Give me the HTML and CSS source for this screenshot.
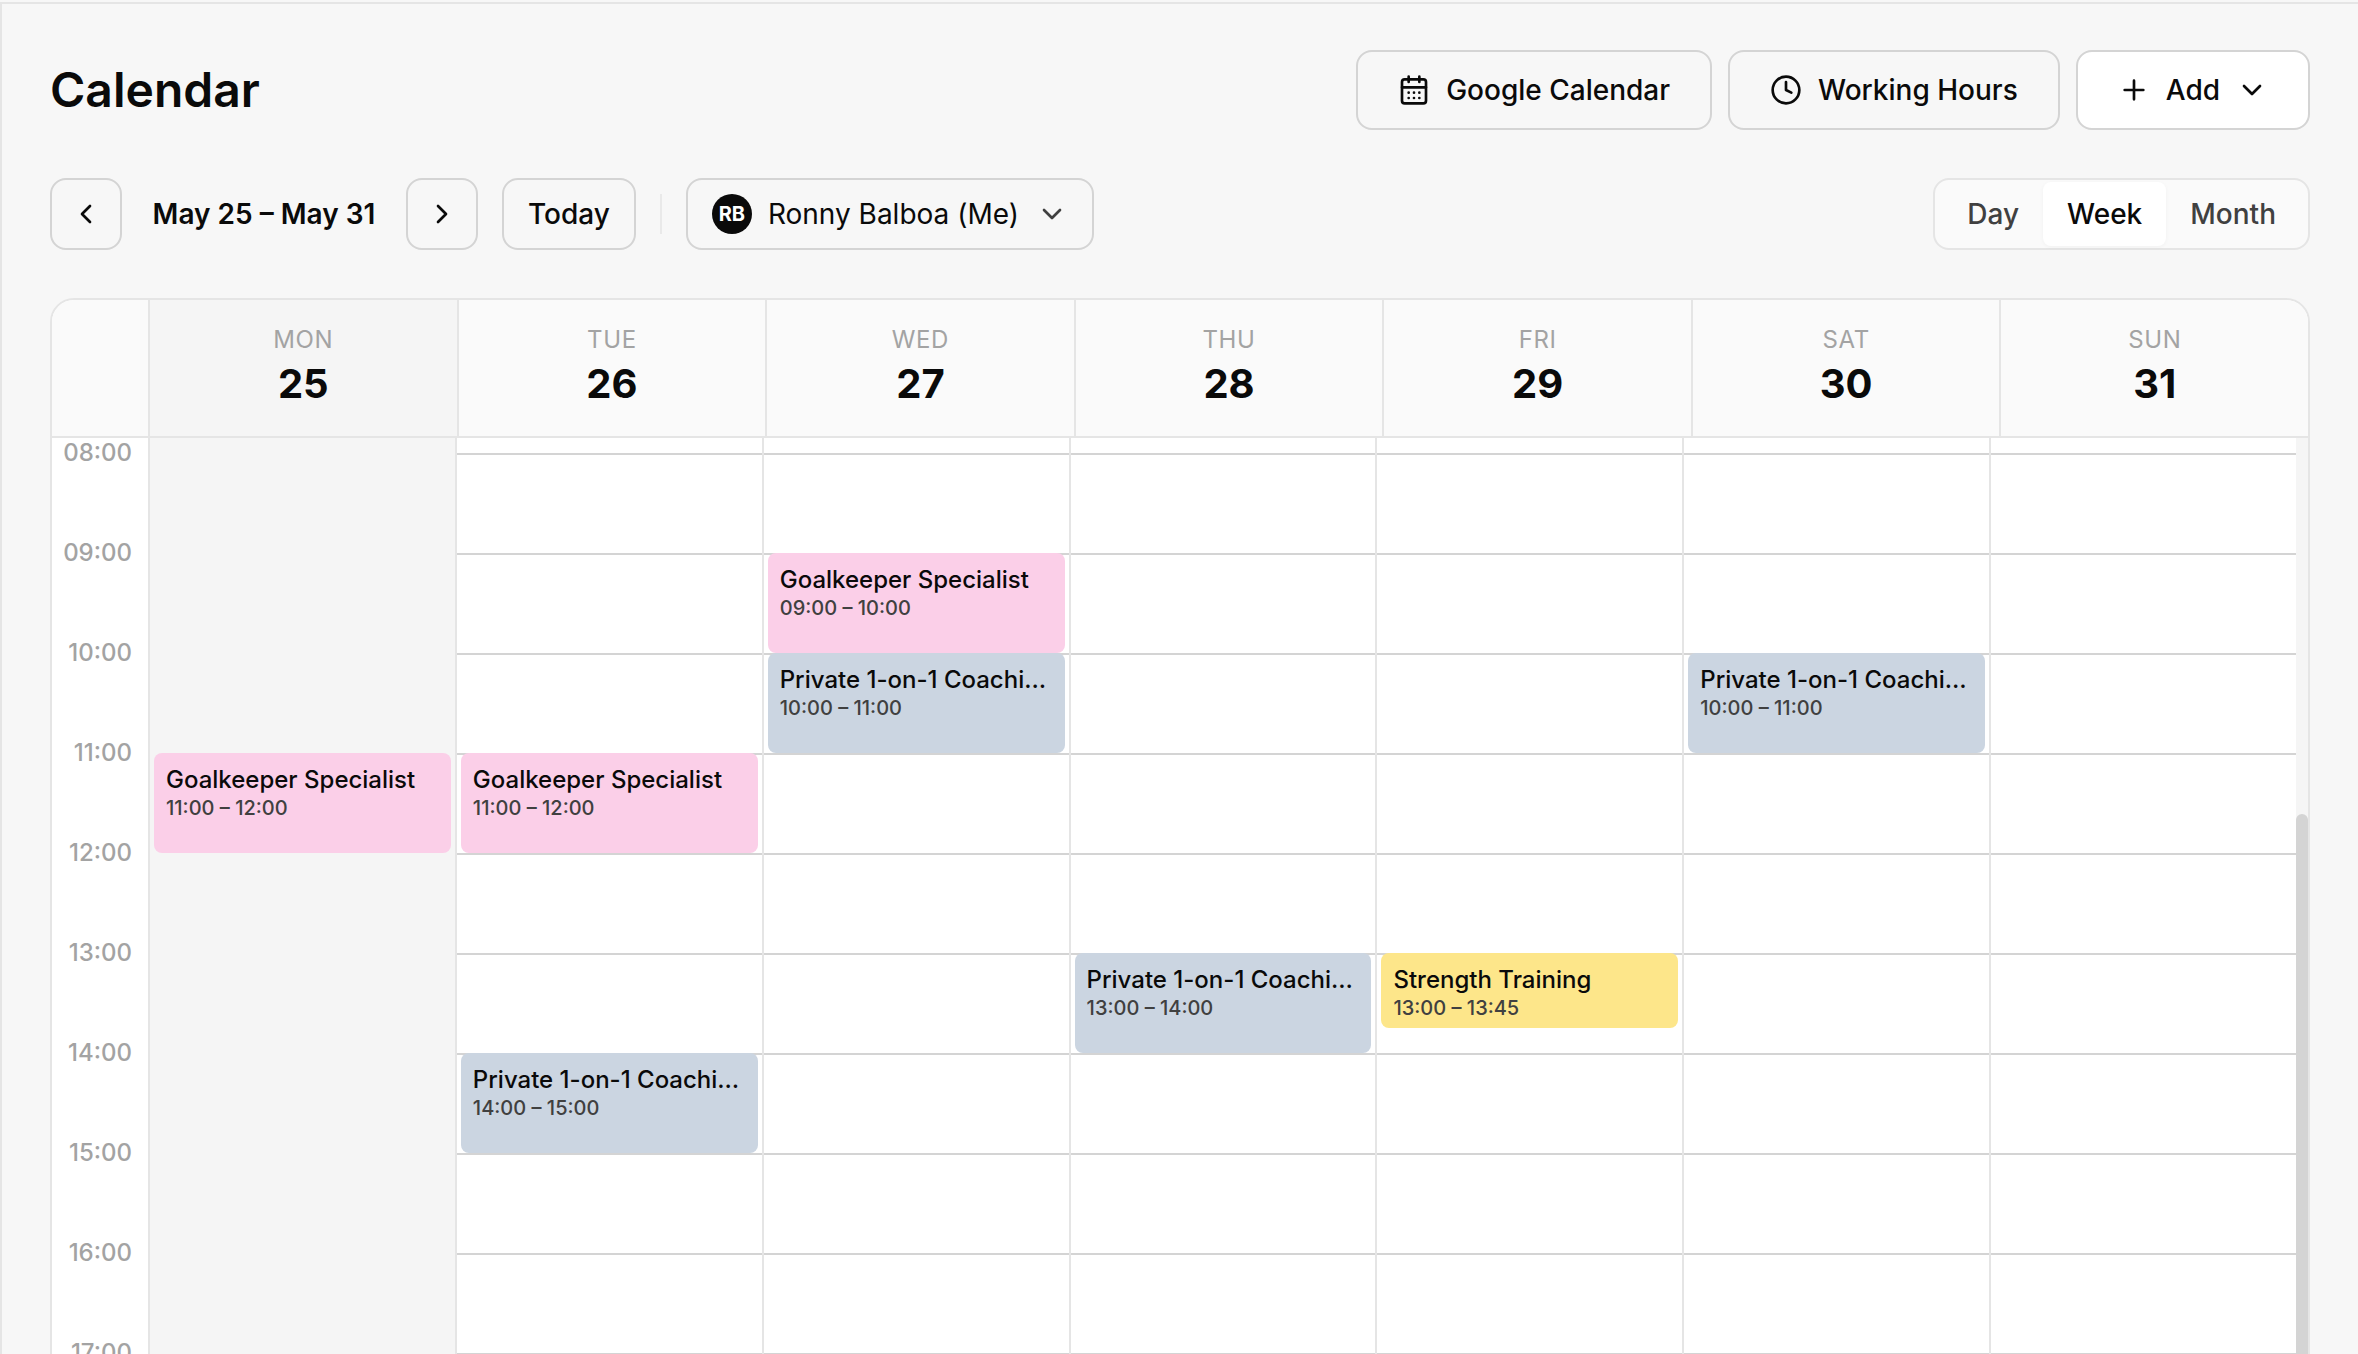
FILE: index.html
```html
<!DOCTYPE html>
<html lang="en">
<head>
    <meta charset="UTF-8">
    <meta name="viewport" content="width=device-width, initial-scale=1.0">
    <title>Calendar</title>
    <link rel="stylesheet" href="styles.css">
</head>
<body>
    <main class="page">
        <header class="header">
            <h1 class="title">Calendar</h1>
            <div class="header-actions">
                <button class="btn btn-large">
                    <svg class="icon" viewBox="0 0 24 24"><path d="M8 2v4M16 2v4M3 10h18M8 14h.01M12 14h.01M16 14h.01M8 18h.01M12 18h.01M16 18h.01"/><rect x="3" y="4" width="18" height="18" rx="2"/></svg>
                    Google Calendar
                </button>
                <button class="btn btn-large">
                    <svg class="icon" viewBox="0 0 24 24"><circle cx="12" cy="12" r="10"/><path d="M12 6v6l4 2"/></svg>
                    Working Hours
                </button>
                <button class="btn btn-large btn-white">
                    <svg class="icon" viewBox="0 0 24 24"><path d="M5 12h14M12 5v14"/></svg>
                    Add
                    <svg class="icon" viewBox="0 0 24 24"><path d="m6 9 6 6 6-6"/></svg>
                </button>
            </div>
        </header>

        <div class="toolbar">
            <div class="date-nav">
                <button class="btn btn-icon" aria-label="Previous week">
                    <svg class="icon" viewBox="0 0 24 24"><path d="m15 18-6-6 6-6"/></svg>
                </button>
                <span class="date-range">May 25 – May 31</span>
                <button class="btn btn-icon" aria-label="Next week">
                    <svg class="icon" viewBox="0 0 24 24"><path d="m9 18 6-6-6-6"/></svg>
                </button>
            </div>
            <button class="btn">Today</button>
            <span class="divider"></span>
            <label class="coach-picker">
                <span class="avatar">RB</span>
                <select class="coach-select" aria-label="Coach">
                    <option>Ronny Balboa (Me)</option>
                </select>
                <svg class="icon" viewBox="0 0 24 24"><path d="m6 9 6 6 6-6"/></svg>
            </label>
            <div class="view-switch">
                <button class="view-btn">Day</button>
                <button class="view-btn active">Week</button>
                <button class="view-btn">Month</button>
            </div>
        </div>

        <section class="calendar">
            <div class="week-header">
                <div class="gutter"></div>
                <div class="days" id="dayNames"></div>
            </div>
            <div class="week-body">
                <div class="week-scroll" id="weekScroll">
                    <div class="gutter" id="hours"></div>
                    <div class="days" id="dayColumns"></div>
                </div>
                <div class="scrollbar">
                    <div class="scrollbar-thumb" id="scrollThumb"></div>
                </div>
            </div>
        </section>
    </main>

    <script>
        const HOUR_HEIGHT = 100;
        const START_SCROLL = 785;

        const days = [
            { name: 'Mon', date: 25, today: true },
            { name: 'Tue', date: 26 },
            { name: 'Wed', date: 27 },
            { name: 'Thu', date: 28 },
            { name: 'Fri', date: 29 },
            { name: 'Sat', date: 30 },
            { name: 'Sun', date: 31 }
        ];

        const events = [
            { day: 25, title: 'Goalkeeper Specialist', start: '11:00', end: '12:00', color: 'pink' },
            { day: 26, title: 'Goalkeeper Specialist', start: '11:00', end: '12:00', color: 'pink' },
            { day: 26, title: 'Private 1-on-1 Coaching', start: '14:00', end: '15:00', color: 'slate' },
            { day: 27, title: 'Goalkeeper Specialist', start: '09:00', end: '10:00', color: 'pink' },
            { day: 27, title: 'Private 1-on-1 Coaching', start: '10:00', end: '11:00', color: 'slate' },
            { day: 28, title: 'Private 1-on-1 Coaching', start: '13:00', end: '14:00', color: 'slate' },
            { day: 29, title: 'Strength Training', start: '13:00', end: '13:45', color: 'yellow' },
            { day: 30, title: 'Private 1-on-1 Coaching', start: '10:00', end: '11:00', color: 'slate' }
        ];

        const hours = Array.from({ length: 24 }, (_, h) => String(h).padStart(2, '0') + ':00');

        function toPixels(time) {
            const [h, m] = time.split(':').map(Number);
            return (h + m / 60) * HOUR_HEIGHT;
        }

        function renderEvent(event) {
            const top = toPixels(event.start);
            const height = toPixels(event.end) - top;
            return `
                <article class="event event-${event.color}" style="top: ${top}px; height: ${height}px">
                    <div class="event-title">${event.title}</div>
                    <div class="event-time">${event.start} – ${event.end}</div>
                </article>
            `;
        }

        function renderWeek() {
            document.getElementById('dayNames').innerHTML = days.map(day => `
                <div class="day-head ${day.today ? 'today' : ''}">
                    <span class="day-name">${day.name}</span>
                    <span class="day-date">${day.date}</span>
                </div>
            `).join('');

            document.getElementById('hours').innerHTML = hours.map(hour => `
                <div class="hour"><span class="hour-label">${hour}</span></div>
            `).join('');

            document.getElementById('dayColumns').innerHTML = days.map(day => `
                <div class="day-column ${day.today ? 'today' : ''}">
                    ${hours.map(() => '<div class="slot"></div>').join('')}
                    ${events.filter(event => event.day === day.date).map(renderEvent).join('')}
                </div>
            `).join('');
        }

        function updateThumb() {
            const el = document.getElementById('weekScroll');
            const thumb = document.getElementById('scrollThumb');
            thumb.style.top = (el.scrollTop / el.scrollHeight * 100) + '%';
            thumb.style.height = (el.clientHeight / el.scrollHeight * 100) + '%';
        }

        renderWeek();

        const weekScroll = document.getElementById('weekScroll');
        weekScroll.addEventListener('scroll', updateThumb);
        weekScroll.scrollTop = START_SCROLL;
        updateThumb();
    </script>
</body>
</html>
```

FILE: styles.css
```css
* {
    margin: 0;
    padding: 0;
    box-sizing: border-box;
}

body {
    height: 100vh;
    padding-top: 2px;
    overflow: hidden;
    background-color: #f7f7f7;
    color: #0a0a0a;
    font-family: Inter, 'Liberation Sans', sans-serif;
    font-size: 28px;
}

button,
select {
    font: inherit;
    color: inherit;
    cursor: pointer;
}

.page {
    height: 100%;
    padding: 46px 48px 0;
    border-top: 2px solid #e5e5e5;
    border-left: 2px solid #e5e5e5;
    overflow: hidden;
}

.header {
    display: flex;
    align-items: center;
    justify-content: space-between;
    margin-bottom: 48px;
}

.title {
    font-size: 48px;
    font-weight: 600;
    line-height: 64px;
}

.header-actions {
    display: flex;
    gap: 16px;
}

.icon {
    width: 32px;
    height: 32px;
    flex-shrink: 0;
    fill: none;
    stroke: currentColor;
    stroke-width: 2;
    stroke-linecap: round;
    stroke-linejoin: round;
}

.btn {
    display: flex;
    align-items: center;
    justify-content: center;
    gap: 16px;
    height: 72px;
    padding: 0 24px;
    border: 2px solid #d4d4d4;
    border-radius: 16px;
    background: transparent;
    font-weight: 500;
    white-space: nowrap;
}

.btn:hover {
    background-color: #fff;
}

.btn-large {
    height: 80px;
    padding: 0 40px;
}

.btn-white {
    background-color: #fff;
}

.btn-icon {
    width: 72px;
    padding: 0;
}

.toolbar {
    display: flex;
    align-items: center;
    gap: 24px;
    margin-bottom: 48px;
}

.date-nav {
    display: flex;
    align-items: center;
}

.date-range {
    min-width: 284px;
    text-align: center;
    font-weight: 600;
    white-space: nowrap;
}

.divider {
    width: 2px;
    height: 40px;
    background-color: #e9e9e9;
}

.coach-picker {
    display: flex;
    align-items: center;
    gap: 16px;
    height: 72px;
    padding: 0 24px;
    border: 2px solid #d4d4d4;
    border-radius: 16px;
}

.coach-picker .icon {
    color: #404040;
    pointer-events: none;
}

.avatar {
    display: flex;
    align-items: center;
    justify-content: center;
    width: 40px;
    height: 40px;
    border-radius: 50%;
    background-color: #0a0a0a;
    color: #fff;
    font-size: 20px;
    font-weight: 700;
}

.coach-select {
    appearance: none;
    border: none;
    outline: none;
    background: transparent;
}

.view-switch {
    display: flex;
    height: 72px;
    margin-left: auto;
    padding: 2px 8px;
    border: 2px solid #e5e5e5;
    border-radius: 16px;
    background-color: #fafafa;
}

.view-btn {
    padding: 0 24px;
    border: none;
    border-radius: 8px;
    background: transparent;
    color: #404040;
    font-weight: 500;
}

.view-btn.active {
    background-color: #fff;
    color: #0a0a0a;
    box-shadow: 0 1px 4px rgba(0, 0, 0, 0.04);
}

.calendar {
    border: 2px solid #e5e5e5;
    border-radius: 24px;
    background-color: #fff;
    overflow: hidden;
}

.week-header {
    display: flex;
    height: 138px;
    border-bottom: 2px solid #e5e5e5;
    background-color: #fafafa;
}

.gutter {
    flex: 0 0 98px;
    border-right: 2px solid #e5e5e5;
}

.days {
    flex: 1;
    display: flex;
    min-width: 0;
}

.day-head {
    flex: 1;
    display: flex;
    flex-direction: column;
    align-items: center;
    padding-top: 24px;
    border-right: 2px solid #e5e5e5;
}

.day-head:last-child,
.day-column:last-child {
    border-right: none;
}

.today {
    background-color: #f5f5f5;
}

.day-name {
    color: #a3a3a3;
    font-size: 24px;
    line-height: 32px;
    letter-spacing: 0.025em;
    text-transform: uppercase;
}

.day-date {
    font-size: 40px;
    font-weight: 700;
    line-height: 56px;
}

.week-body {
    display: flex;
    height: 85vh;
}

.week-scroll {
    flex: 1;
    display: flex;
    align-items: flex-start;
    overflow-y: auto;
    scrollbar-width: none;
}

.hour {
    height: 100px;
    padding-right: 16px;
    text-align: right;
}

.hour-label {
    display: block;
    color: #a3a3a3;
    font-size: 24px;
    font-weight: 500;
    line-height: 32px;
    transform: translateY(-50%);
}

.day-column {
    position: relative;
    flex: 1;
    min-width: 0;
    border-right: 2px solid #e5e5e5;
}

.slot {
    height: 100px;
    border-top: 2px solid #d4d4d4;
}

.today .slot {
    border-top-color: transparent;
}

.event {
    position: absolute;
    left: 4px;
    right: 4px;
    padding: 12px;
    border-radius: 8px;
    overflow: hidden;
}

.event-title {
    font-size: 24px;
    font-weight: 500;
    line-height: 30px;
    white-space: nowrap;
    overflow: hidden;
    text-overflow: ellipsis;
}

.event-time {
    color: #404040;
    font-size: 20px;
    font-weight: 500;
    line-height: 26px;
}

.event-pink {
    background-color: #fbcfe8;
}

.event-slate {
    background-color: #cbd5e1;
}

.event-yellow {
    background-color: #fde68a;
}

.scrollbar {
    position: relative;
    flex: 0 0 12px;
    background-color: #f5f5f5;
}

.scrollbar-thumb {
    position: absolute;
    left: 0;
    width: 100%;
    border-radius: 6px;
    background-color: #d4d4d4;
}
```
